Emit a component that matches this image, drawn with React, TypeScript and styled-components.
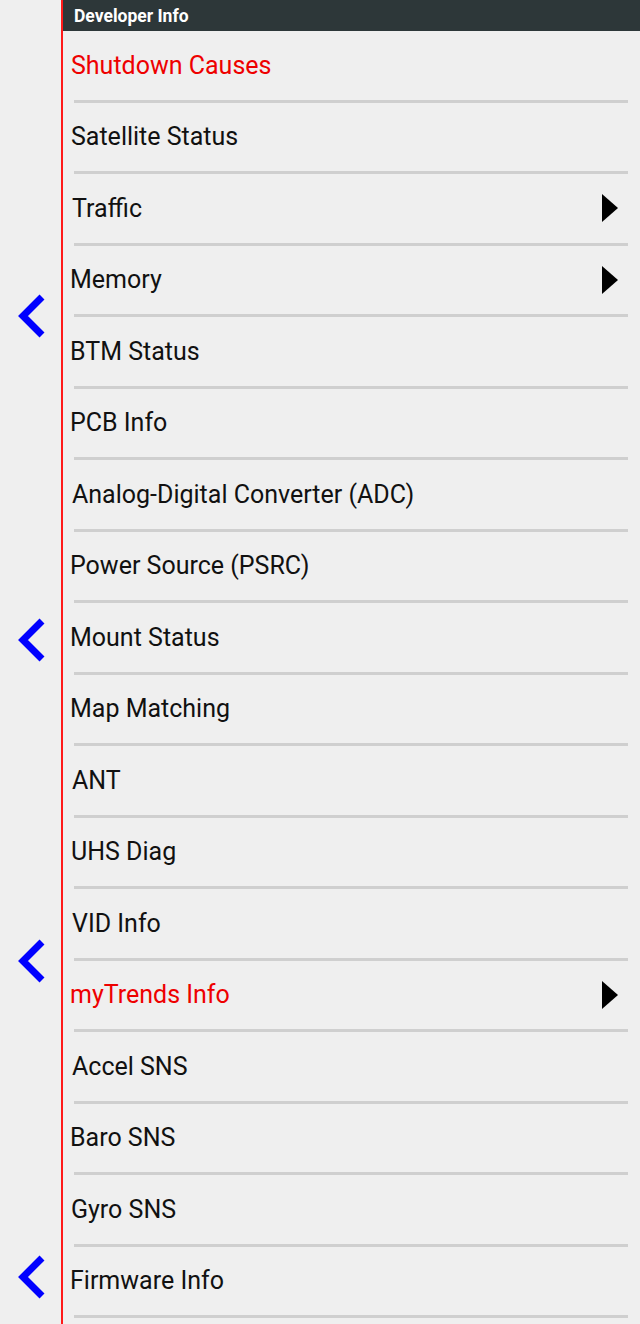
import React from "react";
import styled, { createGlobalStyle } from "styled-components";

const GlobalStyle = createGlobalStyle`
  html, body {
    margin: 0;
    padding: 0;
    background: #efefef;
  }
`;

type Item = { label: string; alert?: boolean; submenu?: boolean; shift?: number };

const items: Item[] = [
  { label: "Shutdown Causes", alert: true, shift: 1 },
  { label: "Satellite Status", shift: 1 },
  { label: "Traffic", submenu: true, shift: 2 },
  { label: "Memory", submenu: true },
  { label: "BTM Status" },
  { label: "PCB Info" },
  { label: "Analog-Digital Converter (ADC)", shift: 2 },
  { label: "Power Source (PSRC)" },
  { label: "Mount Status" },
  { label: "Map Matching" },
  { label: "ANT", shift: 2 },
  { label: "UHS Diag", shift: 1 },
  { label: "VID Info", shift: 2 },
  { label: "myTrends Info", alert: true, submenu: true },
  { label: "Accel SNS", shift: 2 },
  { label: "Baro SNS" },
  { label: "Gyro SNS", shift: 1 },
  { label: "Firmware Info" },
];

// gaps above each back arrow in the side rail
const backArrows = [294, 280, 277, 272];

export default function App() {
  return (
    <>
      <GlobalStyle />
      <Page>
        <SideRail>
          {backArrows.map((gap, i) => (
            <BackButton key={i} $gap={gap} aria-label="Back">
              <svg width="30" height="44" viewBox="0 0 30 44">
                <polyline
                  points="25,3 6,22 25,41"
                  fill="none"
                  stroke="#0000ff"
                  strokeWidth="7"
                  strokeLinejoin="miter"
                />
              </svg>
            </BackButton>
          ))}
        </SideRail>
        <Main>
          <Header>Developer Info</Header>
          <List>
            {items.map((it) => (
              <li key={it.label}>
                <Row>
                  <Label $alert={it.alert} $shift={it.shift ?? 0}>
                    {it.label}
                  </Label>
                  {it.submenu && <Arrow />}
                </Row>
                <Divider />
              </li>
            ))}
          </List>
        </Main>
      </Page>
    </>
  );
}

const Page = styled.div`
  display: flex;
  width: 640px;
  height: 1324px;
  overflow: hidden;
  background: #efefef;
  font-family: Roboto, "Liberation Sans", sans-serif;
`;

const SideRail = styled.nav`
  width: 61px;
  flex-shrink: 0;
  display: flex;
  flex-direction: column;
  align-items: flex-start;
  border-right: 2px solid #ff1a1a;
`;

const BackButton = styled.button<{ $gap: number }>`
  margin-top: ${(p) => p.$gap}px;
  margin-left: 17px;
  width: 30px;
  height: 44px;
  padding: 0;
  border: none;
  background: none;
  display: flex;
  align-items: center;
  justify-content: flex-start;
  cursor: pointer;
`;

const Main = styled.main`
  flex: 1;
  display: flex;
  flex-direction: column;
`;

const Header = styled.h1`
  margin: 0;
  height: 31px;
  padding-left: 11px;
  display: flex;
  align-items: center;
  background: #2d3739;
  color: #ffffff;
  font-size: 17.5px;
  font-weight: 700;
`;

const List = styled.ul`
  margin: 0;
  padding: 0;
  list-style: none;
`;

const Row = styled.div`
  height: 68.5px;
  display: flex;
  align-items: center;
  justify-content: space-between;
  padding: 0 22px 0 7px;
`;

const Label = styled.span<{ $alert?: boolean; $shift: number }>`
  padding-left: ${(p) => p.$shift}px;
  font-size: 25px;
  color: ${(p) => (p.$alert ? "#ee0000" : "#111111")};
`;

const Arrow = styled.span`
  width: 0;
  height: 0;
  border-top: 14px solid transparent;
  border-bottom: 14px solid transparent;
  border-left: 16px solid #000000;
`;

const Divider = styled.div`
  height: 3px;
  margin: 0 12px 0 11px;
  background: #cfcfcf;
`;
